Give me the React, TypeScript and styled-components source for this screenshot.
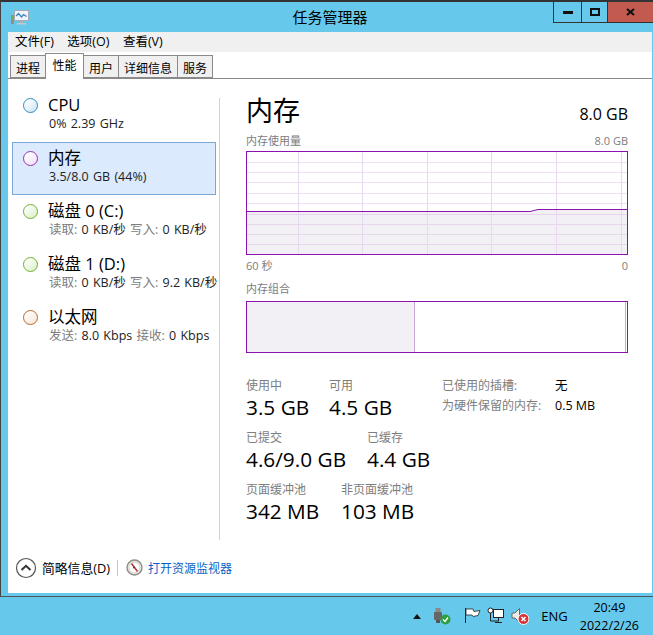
import React from "react";
import styled, { createGlobalStyle } from "styled-components";

const FONT = `"Open Sans", "Noto Sans CJK SC", sans-serif`;

const GlobalStyle = createGlobalStyle`
  html, body { margin: 0; padding: 0; background: #66c9eb; }
  * { box-sizing: border-box; }
`;

const Desktop = styled.div`
  width: 653px;
  height: 635px;
  display: flex;
  flex-direction: column;
  background: #66c9eb;
  font-family: ${FONT};
  color: #000;
  overflow: hidden;
`;

const Win = styled.div`
  height: 597px;
  flex: none;
  display: flex;
  flex-direction: column;
  border-top: 2px solid #333;
  border-left: 1px solid #444;
  border-bottom: 1px solid #555;
  padding: 0 1px 3px 7px;
`;

const TitleBar = styled.div`
  height: 30px;
  flex: none;
  display: grid;
  grid-template-columns: 1fr auto 1fr;
  margin-left: -7px;
  margin-right: -1px;
`;

const AppIcon = styled.div`
  padding: 7px 0 0 9px;
  display: flex;
`;

const Title = styled.div`
  font-size: 15px;
  line-height: 30px;
  padding-left: 6px;
`;

const Controls = styled.div`
  justify-self: end;
  display: flex;
  height: 21px;
  align-items: stretch;
`;

const CtlBtn = styled.div<{ $w: number; $close?: boolean }>`
  width: ${({ $w }) => $w}px;
  display: flex;
  align-items: center;
  justify-content: center;
  border-bottom: 1px solid #333;
  border-left: 1px solid #333;
  background: ${({ $close }) => ($close ? "#c25a50" : "transparent")};
`;

const MenuBar = styled.div`
  height: 20px;
  flex: none;
  display: flex;
  background: #f0f0f0;
  padding-left: 7px;
  gap: 13.5px;
  font-size: 12.5px;
  line-height: 20px;
`;

const TabStrip = styled.div`
  height: 27px;
  flex: none;
  display: flex;
  align-items: flex-end;
  background: #fff;
  border-bottom: 1px solid #8a8a8a;
  padding-left: 2px;
  font-size: 12px;
`;

const Tab = styled.div<{ $active?: boolean }>`
  height: ${({ $active }) => ($active ? "26px" : "23px")};
  padding: 0 ${({ $active }) => ($active ? "6.5px" : "5px")};
  margin-bottom: ${({ $active }) => ($active ? "-1px" : "0")};
  line-height: ${({ $active }) => ($active ? "23px" : "25px")};
  background: ${({ $active }) => ($active ? "#fff" : "#f0f0f0")};
  border: 1px solid #8a8a8a;
  border-bottom: ${({ $active }) => ($active ? "none" : "1px solid #8a8a8a")};
  margin-right: -1px;
  position: relative;
  z-index: ${({ $active }) => ($active ? 1 : 0)};
`;

const Body = styled.div`
  flex: 1;
  min-height: 0;
  background: #fff;
  display: flex;
`;

const Sidebar = styled.div`
  width: 211px;
  flex: none;
  padding: 10px 0 0 4px;
`;

const Item = styled.div<{ $selected?: boolean }>`
  width: 204px;
  height: 53px;
  display: flex;
  padding: 0 0 0 10px;
  background: ${({ $selected }) => ($selected ? "#dbeafc" : "transparent")};
  border: 1px solid ${({ $selected }) => ($selected ? "#7da7d9" : "transparent")};
`;

const Dot = styled.div<{ $c: string; $fill: string }>`
  width: 15px;
  height: 15px;
  margin-top: 8px;
  flex: none;
  border-radius: 50%;
  border: 1.5px solid ${({ $c }) => $c};
  background: linear-gradient(to bottom right, #fff 15%, ${({ $fill }) => $fill});
`;

const ItemText = styled.div`
  margin-left: 10px;
  padding-top: 4px;
  white-space: nowrap;
`;

const ItemTitle = styled.div`
  font-size: 16.5px;
  line-height: 22px;
`;

const ItemSub = styled.div`
  font-size: 12.5px;
  line-height: 16px;
  margin-left: 1px;
  word-spacing: 1px;
  color: #222;
`;

const Muted = styled.span`
  color: #7d7d7d;
`;

const VRule = styled.div`
  width: 1px;
  flex: none;
  margin-top: 19px;
  height: 442px;
  background: #d3d3d3;
`;

const Main = styled.div`
  flex: 1;
  min-width: 0;
  padding: 14px 24px 0 26px;
`;

const HeadRow = styled.div`
  display: flex;
  justify-content: space-between;
  align-items: flex-end;
  height: 36px;
`;

const BigTitle = styled.div`
  font-size: 27px;
  line-height: 36px;
`;

const HeadVal = styled.div`
  font-size: 16px;
  line-height: 24px;
  padding-bottom: 3px;
`;

const CaptionRow = styled.div<{ $mt: number }>`
  display: flex;
  justify-content: space-between;
  margin-top: ${({ $mt }) => $mt}px;
  font-size: 11px;
  line-height: 14px;
  color: #7d7d7d;
`;

const Graph = styled.svg`
  display: block;
  width: 382px;
  height: 104px;
  margin-top: 3px;
`;

const Combo = styled.div`
  width: 382px;
  height: 52px;
  margin-top: 5px;
  padding-right: 1px;
  border: 1px solid #8b12ae;
  display: flex;
`;

const ComboPart = styled.div<{ $bg: string }>`
  background: ${({ $bg }) => $bg};
  border-right: 1.5px solid #c9a8d8;
`;

const StatsGrid = styled.div`
  margin-top: 25px;
  display: flex;
`;

const StatsLeft = styled.div`
  width: 196px;
  flex: none;
  display: flex;
  flex-direction: column;
  gap: 8px;
`;

const StatRow = styled.div`
  display: flex;
`;

const Stat = styled.div<{ $w: number }>`
  width: ${({ $w }) => $w}px;
  flex: none;
  white-space: nowrap;
`;

const StatLabel = styled.div`
  font-size: 12px;
  line-height: 15px;
  color: #7d7d7d;
`;

const StatValue = styled.div`
  font-size: 20.8px;
  line-height: 28px;
  margin-bottom: 1px;
`;

const Facts = styled.div`
  display: grid;
  grid-template-columns: 113px auto;
  grid-auto-rows: 20px;
  font-size: 12px;
  line-height: 16px;
  white-space: nowrap;
`;

const FactValue = styled.span`
  font-size: 12.5px;
`;

const Footer = styled.div`
  height: 53px;
  flex: none;
  background: #fff;
  display: flex;
  align-items: center;
  padding: 2px 0 0 7px;
`;

const FooterText = styled.div`
  font-size: 12.8px;
  margin-left: 5px;
`;

const FooterRule = styled.div`
  width: 1px;
  height: 16px;
  background: #c8c8c8;
  margin: 0 8px 0 7px;
`;

const FooterLink = styled.div`
  font-size: 12px;
  color: #0a5fc4;
  margin-left: 5px;
`;

const Taskbar = styled.div`
  flex: 1;
  display: flex;
  align-items: center;
  justify-content: flex-end;
  padding-right: 14px;
`;

const TrayIcon = styled.svg<{ $ml: number }>`
  flex: none;
  margin-left: ${({ $ml }) => $ml}px;
`;

const Lang = styled.div`
  font-size: 13px;
  margin-left: 12px;
`;

const Clock = styled.div`
  margin-left: 12px;
  padding-top: 2px;
  font-size: 12.5px;
  line-height: 18px;
  text-align: center;
`;

const vLines = [52, 116, 181, 245, 310, 375];
const hLines = [11, 21, 31, 42, 52, 63, 73, 83, 93];

const UsageGraph = () => (
  <Graph viewBox="0 0 382 104">
    <rect width="382" height="104" fill="#fff" />
    <path d="M0 60.5H284L292 58.5H382V104H0Z" fill="#f2f0f4" />
    {hLines.map((y) => (
      <line key={y} x1="0" x2="382" y1={y + 0.5} y2={y + 0.5} stroke={y > 60 ? "#e5d6ea" : "#eedff5"} />
    ))}
    {vLines.map((x) => (
      <line key={x} x1={x + 0.5} x2={x + 0.5} y1="0" y2="104" stroke="#e8d8f0" />
    ))}
    <path d="M0 60.5H284L292 58.5H382" fill="none" stroke="#8b12ae" />
    <rect x="0.5" y="0.5" width="381" height="103" fill="none" stroke="#8b12ae" />
  </Graph>
);

const MonitorIcon = () => (
  <svg width="22" height="18" viewBox="0 0 22 18">
    <rect x="1" y="6" width="3" height="9" fill="#8f8f8f" />
    <rect x="1.500" y="7" width="2" height="3" fill="#6fb24a" />
    <rect x="4.500" y="1.500" width="14" height="10" fill="#eef4f9" stroke="#a4adb4" />
    <path d="M6 7l2.500-2.500 3 3.500 2-2.500 3 2" fill="none" stroke="#3a83c0" strokeWidth="1.300" />
    <rect x="9" y="12" width="5" height="2" fill="#a9b0b5" />
    <rect x="7" y="14" width="9" height="1.500" fill="#c4c9cd" />
  </svg>
);

const CollapseIcon = () => (
  <svg width="22" height="22" viewBox="0 0 22 22">
    <circle cx="11" cy="11" r="9.500" fill="#fff" stroke="#555" strokeWidth="1.200" />
    <path d="M6.500 13L11 8.800 15.500 13" fill="none" stroke="#333" strokeWidth="2" />
  </svg>
);

const GaugeIcon = () => (
  <svg width="17" height="17" viewBox="0 0 17 17">
    <circle cx="8.500" cy="8.500" r="7.500" fill="#e8e6e0" stroke="#8d8d85" strokeWidth="1.400" />
    <circle cx="8.500" cy="8.500" r="5.300" fill="#fff" stroke="#bbb" strokeWidth=".5" />
    <path d="M5.500 4.500L8.500 8.500 11.500 12.500" stroke="#c03030" strokeWidth="1.500" />
    <path d="M7 9l2-1" stroke="#333" />
  </svg>
);

const sideItems = [
  { title: "CPU", c: "#2a8cc7", fill: "#c7e1f2", sub: <>0% 2.39 GHz</> },
  { title: "内存", c: "#9b2fb5", fill: "#f0dcf6", selected: true, sub: <>3.5/8.0 GB (44%)</> },
  {
    title: "磁盘 0 (C:)", c: "#6fb02c", fill: "#d6efc4",
    sub: <><Muted>读取:</Muted> 0 KB/秒 <Muted>写入:</Muted> 0 KB/秒</>,
  },
  {
    title: "磁盘 1 (D:)", c: "#6fb02c", fill: "#d6efc4",
    sub: <><Muted>读取:</Muted> 0 KB/秒 <Muted>写入:</Muted> 9.2 KB/秒</>,
  },
  {
    title: "以太网", c: "#b5692a", fill: "#f7e2d2",
    sub: <><Muted>发送:</Muted> 8.0 Kbps <Muted>接收:</Muted> 0 Kbps</>,
  },
];

export default function App() {
  return (
    <Desktop>
      <GlobalStyle />
      <Win>
        <TitleBar>
          <AppIcon><MonitorIcon /></AppIcon>
          <Title>任务管理器</Title>
          <Controls>
            <CtlBtn $w={28}>
              <svg width="10" height="3"><rect width="10" height="3" fill="#111" /></svg>
            </CtlBtn>
            <CtlBtn $w={26}>
              <svg width="10" height="8"><rect x="1" y="1" width="8" height="6" fill="none" stroke="#111" strokeWidth="2" /></svg>
            </CtlBtn>
            <CtlBtn $w={46} $close>
              <svg width="9" height="8"><path d="M1 1L8 7M8 1L1 7" stroke="#111" strokeWidth="2.200" /></svg>
            </CtlBtn>
          </Controls>
        </TitleBar>
        <MenuBar>
          <span>文件(F)</span>
          <span>选项(O)</span>
          <span>查看(V)</span>
        </MenuBar>
        <TabStrip>
          <Tab>进程</Tab>
          <Tab $active>性能</Tab>
          <Tab>用户</Tab>
          <Tab>详细信息</Tab>
          <Tab>服务</Tab>
        </TabStrip>
        <Body>
          <Sidebar>
            {sideItems.map((it) => (
              <Item key={it.title} $selected={it.selected}>
                <Dot $c={it.c} $fill={it.fill} />
                <ItemText>
                  <ItemTitle>{it.title}</ItemTitle>
                  <ItemSub>{it.sub}</ItemSub>
                </ItemText>
              </Item>
            ))}
          </Sidebar>
          <VRule />
          <Main>
            <HeadRow>
              <BigTitle>内存</BigTitle>
              <HeadVal>8.0 GB</HeadVal>
            </HeadRow>
            <CaptionRow $mt={5}>
              <span>内存使用量</span>
              <span>8.0 GB</span>
            </CaptionRow>
            <UsageGraph />
            <CaptionRow $mt={4}>
              <span>60 秒</span>
              <span>0</span>
            </CaptionRow>
            <CaptionRow $mt={9}>
              <span>内存组合</span>
            </CaptionRow>
            <Combo>
              <ComboPart $bg="#f2f0f4" style={{ width: "44.300%" }} />
              <ComboPart $bg="#fff" style={{ flex: 1 }} />
            </Combo>
            <StatsGrid>
              <StatsLeft>
                <StatRow>
                  <Stat $w={83}><StatLabel>使用中</StatLabel><StatValue>3.5 GB</StatValue></Stat>
                  <Stat $w={83}><StatLabel>可用</StatLabel><StatValue>4.5 GB</StatValue></Stat>
                </StatRow>
                <StatRow>
                  <Stat $w={121}><StatLabel>已提交</StatLabel><StatValue>4.6/9.0 GB</StatValue></Stat>
                  <Stat $w={70}><StatLabel>已缓存</StatLabel><StatValue>4.4 GB</StatValue></Stat>
                </StatRow>
                <StatRow>
                  <Stat $w={95}><StatLabel>页面缓冲池</StatLabel><StatValue>342 MB</StatValue></Stat>
                  <Stat $w={80}><StatLabel>非页面缓冲池</StatLabel><StatValue>103 MB</StatValue></Stat>
                </StatRow>
              </StatsLeft>
              <Facts>
                <Muted>已使用的插槽:</Muted><FactValue>无</FactValue>
                <Muted>为硬件保留的内存:</Muted><FactValue>0.5 MB</FactValue>
              </Facts>
            </StatsGrid>
          </Main>
        </Body>
        <Footer>
          <CollapseIcon />
          <FooterText>简略信息(D)</FooterText>
          <FooterRule />
          <GaugeIcon />
          <FooterLink>打开资源监视器</FooterLink>
        </Footer>
      </Win>
      <Taskbar>
        <TrayIcon $ml={0} width="8" height="5" viewBox="0 0 8 5"><path d="M0 5L4 0 8 5Z" fill="#111" /></TrayIcon>
        <TrayIcon $ml={12} width="18" height="18" viewBox="0 0 18 18">
          <rect x="2.500" y="1" width="5" height="4" fill="#8a8a8a" />
          <rect x="1" y="5" width="8" height="8" rx="1" fill="#666" />
          <rect x="3" y="13" width="4" height="3" fill="#555" />
          <circle cx="12.500" cy="12.500" r="5" fill="#2f9e3f" />
          <path d="M10 12.500l2 2 3-4" fill="none" stroke="#fff" strokeWidth="1.400" />
        </TrayIcon>
        <TrayIcon $ml={12} width="18" height="18" viewBox="0 0 18 18">
          <path d="M2.500 1V16" stroke="#222" />
          <path d="M3 2h7l1 2.500 6-1-2 5-5 1-1-1.500H3z" fill="#fff" stroke="#222" strokeWidth=".8" />
        </TrayIcon>
        <TrayIcon $ml={6} width="18" height="18" viewBox="0 0 18 18">
          <circle cx="3.500" cy="3.500" r="2.500" fill="#fff" stroke="#222" />
          <rect x="6.500" y="2.500" width="10" height="8" fill="#fff" stroke="#222" />
          <path d="M3.500 6V14H12M11.500 10.500V14M8 15.500H15" fill="none" stroke="#222" />
        </TrayIcon>
        <TrayIcon $ml={6} width="18" height="18" viewBox="0 0 18 18">
          <path d="M1 6H4L8.500 1.500V15.500L4 11H1Z" fill="#ececec" stroke="#666" />
          <circle cx="12.500" cy="12" r="5.500" fill="#d8343c" stroke="#fff" />
          <path d="M10.500 10L14.500 14M14.500 10L10.500 14" stroke="#fff" strokeWidth="1.500" />
        </TrayIcon>
        <Lang>ENG</Lang>
        <Clock>
          <div>20:49</div>
          <div>2022/2/26</div>
        </Clock>
      </Taskbar>
    </Desktop>
  );
}
